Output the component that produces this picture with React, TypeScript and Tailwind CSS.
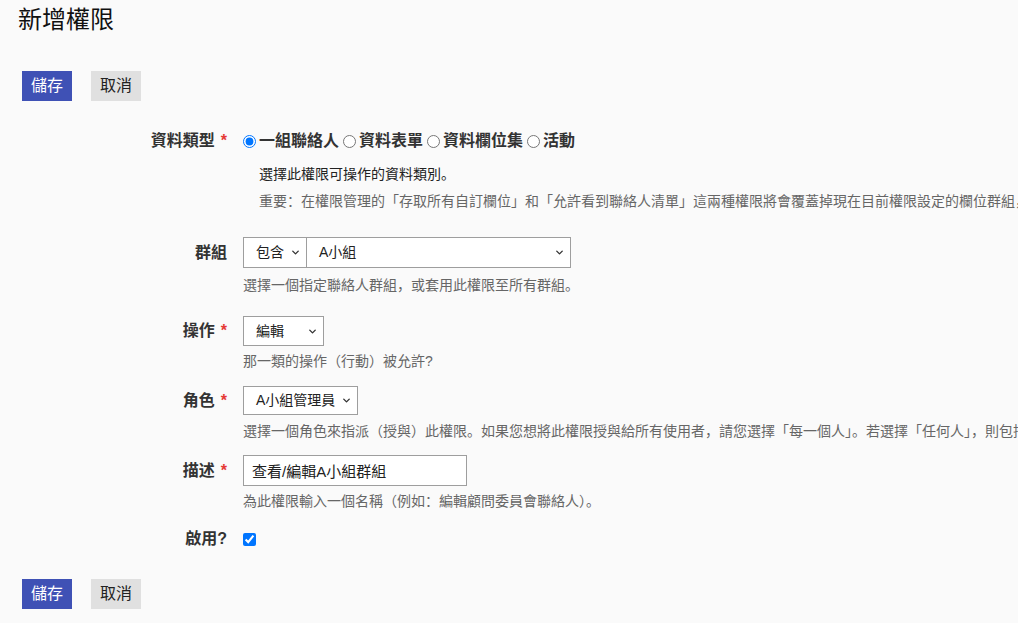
import { ChevronDown } from "lucide-react";

const font = { fontFamily: "'Liberation Sans', 'Noto Sans CJK SC', sans-serif" };

const Star = () => <span className="text-[#e53935] ml-[6px]">*</span>;

const Select = ({ value, width }: { value: string; width: string }) => (
    <div className={`${width} h-full flex items-center justify-between pl-[12px] pr-[5px] bg-white border border-[#9e9e9e] text-[14px] text-[#222] whitespace-nowrap`}>
        <span>{value}</span>
        <ChevronDown className="w-[11px] h-[11px] text-[#333] shrink-0" strokeWidth={3} />
    </div>
);

const Buttons = () => (
    <div className="flex gap-[19px]">
        <button className="w-[50px] h-[30px] bg-[#3f51b5] text-white text-[16px]">儲存</button>
        <button className="w-[50px] h-[30px] bg-[#e0e0e0] text-[#222] text-[16px]">取消</button>
    </div>
);

const Label = ({ children }: { children: React.ReactNode }) => (
    <div className="w-[210px] shrink-0 text-right text-[16px] font-bold text-[#333] pr-[1px]">{children}</div>
);

const Help = ({ children, className = "" }: { children: React.ReactNode; className?: string }) => (
    <div className={`text-[14px] leading-[20px] whitespace-nowrap ${className}`}>{children}</div>
);

const Radio = ({ label, checked = false, first = false }: { label: string; checked?: boolean; first?: boolean }) => (
    <label className="flex items-center">
        <input type="radio" name="t" defaultChecked={checked} className={`w-[13px] h-[13px] m-0 mr-[3px] ${first ? "" : "ml-[4px]"}`} />
        <span>{label}</span>
    </label>
);

export default function App() {
    return (
        <div className="w-screen min-h-screen overflow-hidden bg-[#fafafa] text-[#222]" style={font}>
            <div className="pl-[18px] pr-4 pt-[4px]">
                <h1 className="text-[24px] leading-[32px] text-[#111]">新增權限</h1>

                <div className="mt-[35px] pl-[4px]">
                    <Buttons />
                </div>

                <div className="mt-[29px] flex flex-col">
                    {/* 資料類型 */}
                    <div className="flex gap-[15px] items-center h-[22px]">
                        <Label>資料類型<Star /></Label>
                        <div className="flex items-center text-[16px] font-bold text-[#333] whitespace-nowrap">
                            <Radio label="一組聯絡人" checked first />
                            <Radio label="資料表單" />
                            <Radio label="資料欄位集" />
                            <Radio label="活動" />
                        </div>
                    </div>
                    <div className="pl-[241px]">
                        <Help className="mt-[12px] text-[#222]">選擇此權限可操作的資料類別。</Help>
                        <Help className="mt-[7px] text-[#666]">重要：在權限管理的「存取所有自訂欄位」和「允許看到聯絡人清單」這兩種權限將會覆蓋掉現在目前權限設定的欄位群組，</Help>
                    </div>

                    {/* 群組 */}
                    <div className="flex gap-[15px] items-center h-[31px] mt-[26px]">
                        <Label>群組</Label>
                        <div className="flex h-full">
                            <Select value="包含" width="w-[64px]" />
                            <div className="-ml-[1px] h-full">
                                <Select value="A小組" width="w-[265px]" />
                            </div>
                        </div>
                    </div>
                    <div className="pl-[225px]">
                        <Help className="mt-[7px] text-[#666]">選擇一個指定聯絡人群組，或套用此權限至所有群組。</Help>
                    </div>

                    {/* 操作 */}
                    <div className="flex gap-[15px] items-center h-[30px] mt-[21px]">
                        <Label>操作<Star /></Label>
                        <Select value="編輯" width="w-[81px]" />
                    </div>
                    <div className="pl-[225px]">
                        <Help className="mt-[5px] text-[#666]">那一類的操作（行動）被允許?</Help>
                    </div>

                    {/* 角色 */}
                    <div className="flex gap-[15px] items-center h-[29px] mt-[15px]">
                        <Label>角色<Star /></Label>
                        <Select value="A小組管理員" width="w-[115px]" />
                    </div>
                    <div className="pl-[225px]">
                        <Help className="mt-[6px] text-[#666]">選擇一個角色來指派（授與）此權限。如果您想將此權限授與給所有使用者，請您選擇「每一個人」。若選擇「任何人」，則包括</Help>
                    </div>

                    {/* 描述 */}
                    <div className="flex gap-[15px] items-center h-[31px] mt-[14px]">
                        <Label>描述<Star /></Label>
                        <input
                            defaultValue="查看/編輯A小組群組"
                            className="w-[224px] h-full bg-white border border-[#9e9e9e] px-[8px] text-[15px] text-[#222] outline-none"
                        />
                    </div>
                    <div className="pl-[225px]">
                        <Help className="mt-[5px] text-[#666]">為此權限輸入一個名稱（例如：編輯顧問委員會聯絡人）。</Help>
                    </div>

                    {/* 啟用 */}
                    <div className="flex gap-[15px] items-center h-[22px] mt-[17px]">
                        <Label>啟用?</Label>
                        <input type="checkbox" defaultChecked className="w-[13px] h-[13px] m-0" />
                    </div>
                </div>

                <div className="mt-[29px] pl-[4px]">
                    <Buttons />
                </div>
            </div>
        </div>
    );
}
